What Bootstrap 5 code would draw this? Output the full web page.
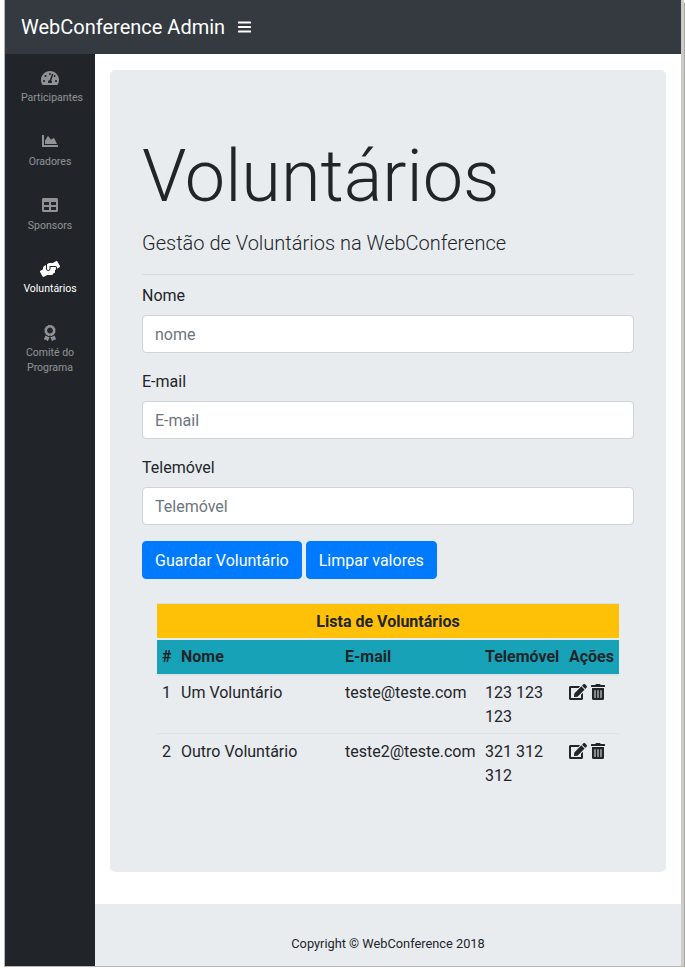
<!DOCTYPE html>
<html lang="pt">
<head>
<meta charset="utf-8">
<title>WebConference Admin</title>
<link href="https://cdn.jsdelivr.net/npm/bootstrap@5.3.0/dist/css/bootstrap.min.css" rel="stylesheet">
<style>
html,body{height:100%;background:#fff}
body{font-family:Roboto,sans-serif;font-size:16px;color:#212529;overflow:hidden}
.frame{width:685px;height:969px;padding:0 1px 2px 4px;background:linear-gradient(#aaa,#aaa) right 3px/1px 964px no-repeat}
.shell{height:967px;border-left:1px solid #b5b5b5;border-right:3px solid #cfcbc7;border-bottom:1px solid #b5b5b5;display:flex;flex-direction:column;background:#fff}
.topbar{height:54px;background:#343a40;padding:0 16px;flex:none}
.brandname{font-size:20px;color:#fff;text-decoration:none;margin-right:13px}
.burger{display:block}
.lower{flex:1;display:flex;min-height:0}
.side{width:90px;background:#212529;flex:none;padding:15.5px 0 0}
.side-link{display:block;text-align:center;color:rgba(255,255,255,.5);font-size:10.5px;line-height:15px;text-decoration:none;padding:0 16px;margin-bottom:18.75px;height:45px}
.side-link svg{display:block;margin:0 auto 4.5px;height:16px;fill:currentColor;overflow:visible}
.side-link.on{color:#fff}
.main{flex:1;display:flex;flex-direction:column;min-width:0}
.content{flex:1;padding:16px 15px 0}
.hero{background:#e9ecef;border-radius:5px;height:802px;padding:64px 32px}
.hero-title{font-size:72px;font-weight:300;line-height:1.2;margin:0 0 8px}
.hero-sub{font-size:20px;font-weight:300;line-height:30px;margin:0 0 16px}
.hero hr{margin:16px 0 8px;opacity:1;border-color:#d8dbde}
.field-label{margin-bottom:8px;line-height:24px;display:block;padding-top:1px;height:24px}
.field{height:38px;border-color:#ced4da;border-radius:4px;color:#495057;padding:6px 12px}
.field::placeholder{color:#6c757d}
.field-group{margin-bottom:16px}
.action{background:#007bff;border-color:#007bff;border-radius:4px;height:38px;padding:7px 12px 5px}
.tbl-wrap{padding:0 15px;margin-top:24px}
.vtable{width:462px;table-layout:fixed;border-collapse:separate;border-spacing:0;color:#212529;margin:0;--bs-table-bg:transparent}
.vtable th,.vtable td{padding:5px;line-height:24px;border:0;background:transparent;color:#212529}
.vtable .cap th{background:#ffc107;text-align:center;border-top:1px solid #dee2e6;height:35px;padding:6px 5px 4px}
.vtable .heads th{background:#17a2b8;border-top:2px solid #e9ecef;border-bottom:2px solid #dee2e6;height:38px;padding:5px 5px 5px}
.vtable tbody td{padding:5px 5px 4px}
.vtable tbody tr+tr td{border-top:1px solid #dee2e6;padding-top:6px}
.acts{display:flex;gap:4px;padding-top:3px}
.acts svg{height:16px;display:block;fill:#212529}
.foot{height:62px;background:#e9ecef;flex:none;display:flex;align-items:flex-end;justify-content:center;font-size:12.8px;padding-bottom:13px;line-height:19px}
</style>
</head>
<body>
<div class="frame">
<div class="shell">
  <nav class="navbar topbar d-flex justify-content-start align-items-center flex-nowrap">
    <a class="brandname" href="#">WebConference Admin</a>
    <svg class="burger" width="13" height="12" viewBox="0 0 13 12" fill="#fff"><rect y="0.5" width="13" height="2" rx=".5"/><rect y="5" width="13" height="2" rx=".5"/><rect y="9.5" width="13" height="2" rx=".5"/></svg>
  </nav>
  <div class="lower">
    <aside class="side">
      <a class="side-link" href="#"><svg viewBox="0 0 576 512"><path d="M288 32C128.94 32 0 160.94 0 320c0 52.8 14.25 102.26 39.06 144.8 5.61 9.62 16.3 15.2 27.44 15.2h443c11.14 0 21.83-5.58 27.44-15.2C561.75 422.26 576 372.8 576 320c0-159.06-128.94-288-288-288zm0 64c14.71 0 26.58 10.13 30.32 23.65-1.11 2.26-2.64 4.23-3.45 6.67l-9.22 27.67c-5.13 3.49-10.97 6.01-17.64 6.01-17.67 0-32-14.33-32-32S270.33 96 288 96zM96 384c-17.67 0-32-14.33-32-32s14.33-32 32-32 32 14.33 32 32-14.33 32-32 32zm48-160c-17.67 0-32-14.33-32-32s14.33-32 32-32 32 14.33 32 32-14.33 32-32 32zm246.77-72.41l-61.33 184C343.13 347.33 352 364.54 352 384c0 11.72-3.38 22.55-8.88 32H232.88c-5.5-9.45-8.88-20.28-8.88-32 0-33.94 26.5-61.43 59.9-63.59l61.34-184.01c4.17-12.56 17.73-19.45 30.36-15.17 12.57 4.19 19.35 17.79 15.17 30.36zm14.66 57.2l15.52-46.55c3.47-1.29 7.13-2.23 11.05-2.23 17.67 0 32 14.33 32 32s-14.33 32-32 32c-11.38-.01-20.89-6.28-26.57-15.22zM480 384c-17.67 0-32-14.33-32-32s14.33-32 32-32 32 14.33 32 32-14.33 32-32 32z"/></svg>Participantes</a>
      <a class="side-link" href="#"><svg viewBox="0 0 512 512"><path d="M500 384c6.6 0 12 5.4 12 12v40c0 6.6-5.4 12-12 12H12c-6.6 0-12-5.4-12-12V76c0-6.6 5.4-12 12-12h40c6.6 0 12 5.4 12 12v308h436zM372.7 159.5L288 216l-85.3-113.7c-5.1-6.8-15.5-6.3-19.9.9L96 248v104h384l-89.9-187.8c-3.2-6.5-11.4-8.7-17.4-4.7z"/></svg>Oradores</a>
      <a class="side-link" href="#"><svg viewBox="0 0 512 512"><path d="M464 32H48C21.49 32 0 53.49 0 80v352c0 26.51 21.49 48 48 48h416c26.51 0 48-21.49 48-48V80c0-26.51-21.49-48-48-48zM224 416H64v-96h160v96zm0-160H64v-96h160v96zm224 160H288v-96h160v96zm0-160H288v-96h160v96z"/></svg>Sponsors</a>
      <a class="side-link on" href="#"><svg viewBox="0 0 640 512"><path d="M488 192H336v56c0 39.7-32.3 72-72 72s-72-32.3-72-72V126.4l-64.9 39C107.8 176.9 96 197.8 96 220.2v47.3l-80 46.2C.7 322.5-4.6 342.1 4.3 357.4l80 138.6c8.8 15.3 28.4 20.5 43.7 11.7L231.4 448H368c35.3 0 64-28.7 64-64h16c17.7 0 32-14.3 32-32v-64h8c13.3 0 24-10.7 24-24v-48c0-13.3-10.7-24-24-24zm147.7-37.4L555.7 16C546.9.7 527.3-4.5 512 4.3L408.6 64H306.4c-12 0-23.7 3.4-34 9.7L238.9 94.6C229.5 100.4 224 110.6 224 121.6V248c0 22.1 17.9 40 40 40s40-17.9 40-40v-88h184c30.9 0 56 25.1 56 56v28.5l80-46.2c15.3-8.9 20.5-28.4 11.7-43.7z"/></svg>Voluntários</a>
      <a class="side-link" href="#"><svg viewBox="0 0 384 512"><path d="M97.12 362.63c-8.69-8.69-4.16-6.24-25.12-11.85-9.51-2.55-17.87-7.45-25.43-13.32L1.2 448.7c-4.39 10.77 3.81 22.47 15.43 22.03l52.69-2.01L105.56 507c8 8.44 22.04 5.81 26.43-4.96l52.05-127.62c-10.84 6.04-22.87 9.58-35.31 9.58-19.5 0-37.82-7.59-51.61-21.37zM382.8 448.7l-45.37-111.24c-7.56 5.88-15.92 10.77-25.43 13.32-21.07 5.64-16.45 3.18-25.12 11.85-13.79 13.78-32.12 21.37-51.62 21.37-12.44 0-24.47-3.55-35.31-9.58L252 502.04c4.39 10.77 18.44 13.4 26.43 4.96l36.25-38.28 52.69 2.01c11.62.44 19.82-11.27 15.43-22.03zM263 340c15.28-15.55 17.03-14.21 38.79-20.14 13.89-3.79 24.75-14.84 28.47-28.98 7.48-28.4 5.54-24.97 25.95-45.75 10.17-10.35 14.14-25.44 10.42-39.58-7.47-28.38-7.48-24.42 0-52.83 3.72-14.14-.25-29.23-10.42-39.58-20.41-20.78-18.47-17.36-25.95-45.75-3.72-14.14-14.58-25.19-28.47-28.98-27.88-7.61-24.52-5.62-44.95-26.41-10.17-10.35-25-14.4-38.89-10.61-27.87 7.6-23.98 7.61-51.9 0-13.89-3.79-28.72.25-38.89 10.61-20.41 20.78-17.05 18.8-44.94 26.41-13.89 3.79-24.75 14.84-28.47 28.98-7.47 28.39-5.54 24.97-25.95 45.75-10.17 10.35-14.15 25.44-10.42 39.58 7.47 28.36 7.48 24.4 0 52.82-3.72 14.14.25 29.23 10.42 39.59 20.41 20.78 18.47 17.35 25.95 45.75 3.72 14.14 14.58 25.19 28.47 28.98C104.6 325.96 106.27 325 121 340c13.23 13.47 33.84 15.88 49.74 5.82a39.676 39.676 0 0 1 42.53 0c15.89 10.06 36.5 7.65 49.73-5.82zM97.66 175.96c0-53.03 42.24-96.02 94.34-96.02s94.34 42.99 94.34 96.02-42.24 96.02-94.34 96.02-94.34-42.99-94.34-96.02z"/></svg>Comité do Programa</a>
    </aside>
    <div class="main">
      <div class="content">
        <section class="hero">
          <h1 class="hero-title">Voluntários</h1>
          <p class="hero-sub">Gestão de Voluntários na WebConference</p>
          <hr>
          <form>
            <div class="field-group"><label class="field-label">Nome</label><input class="form-control field" placeholder="nome"></div>
            <div class="field-group"><label class="field-label">E-mail</label><input class="form-control field" placeholder="E-mail"></div>
            <div class="field-group"><label class="field-label">Telemóvel</label><input class="form-control field" placeholder="Telemóvel"></div>
            <button type="button" class="btn btn-primary action">Guardar Voluntário</button>
            <button type="button" class="btn btn-primary action">Limpar valores</button>
          </form>
          <div class="tbl-wrap">
            <table class="table vtable">
              <colgroup><col style="width:19px"><col style="width:164px"><col style="width:140px"><col style="width:84px"><col style="width:55px"></colgroup>
              <thead>
                <tr class="cap"><th colspan="5">Lista de Voluntários</th></tr>
                <tr class="heads"><th>#</th><th>Nome</th><th>E-mail</th><th>Telemóvel</th><th>Ações</th></tr>
              </thead>
              <tbody>
                <tr><td>1</td><td>Um Voluntário</td><td>teste@teste.com</td><td>123 123 123</td><td><div class="acts"><svg viewBox="0 0 576 512"><path d="M402.6 83.2l90.2 90.2c3.8 3.8 3.8 10 0 13.8L274.4 405.6l-92.8 10.3c-12.4 1.4-22.9-9.1-21.5-21.5l10.3-92.8L388.8 83.2c3.8-3.8 10-3.8 13.8 0zm162-22.9l-48.8-48.8c-15.2-15.2-39.9-15.2-55.2 0l-35.4 35.4c-3.8 3.8-3.8 10 0 13.8l90.2 90.2c3.8 3.8 10 3.8 13.8 0l35.4-35.4c15.2-15.3 15.2-40 0-55.2zM384 346.2V448H64V128h229.8c3.2 0 6.2-1.3 8.5-3.5l40-40c7.6-7.6 2.2-20.5-8.5-20.5H48C21.5 64 0 85.5 0 112v352c0 26.5 21.5 48 48 48h352c26.5 0 48-21.5 48-48V306.2c0-10.7-12.9-16-20.5-8.5l-40 40c-2.2 2.3-3.5 5.3-3.5 8.5z"/></svg><svg viewBox="0 0 448 512"><path d="M32 464a48 48 0 0 0 48 48h288a48 48 0 0 0 48-48V128H32zm272-256a16 16 0 0 1 32 0v224a16 16 0 0 1-32 0zm-96 0a16 16 0 0 1 32 0v224a16 16 0 0 1-32 0zm-96 0a16 16 0 0 1 32 0v224a16 16 0 0 1-32 0zM432 32H312l-9.4-18.7A24 24 0 0 0 281.1 0H166.8a23.72 23.72 0 0 0-21.4 13.3L136 32H16A16 16 0 0 0 0 48v32a16 16 0 0 0 16 16h416a16 16 0 0 0 16-16V48a16 16 0 0 0-16-16z"/></svg></div></td></tr>
                <tr><td>2</td><td>Outro Voluntário</td><td>teste2@teste.com</td><td>321 312 312</td><td><div class="acts"><svg viewBox="0 0 576 512"><path d="M402.6 83.2l90.2 90.2c3.8 3.8 3.8 10 0 13.8L274.4 405.6l-92.8 10.3c-12.4 1.4-22.9-9.1-21.5-21.5l10.3-92.8L388.8 83.2c3.8-3.8 10-3.8 13.8 0zm162-22.9l-48.8-48.8c-15.2-15.2-39.9-15.2-55.2 0l-35.4 35.4c-3.8 3.8-3.8 10 0 13.8l90.2 90.2c3.8 3.8 10 3.8 13.8 0l35.4-35.4c15.2-15.3 15.2-40 0-55.2zM384 346.2V448H64V128h229.8c3.2 0 6.2-1.3 8.5-3.5l40-40c7.6-7.6 2.2-20.5-8.5-20.5H48C21.5 64 0 85.5 0 112v352c0 26.5 21.5 48 48 48h352c26.5 0 48-21.5 48-48V306.2c0-10.7-12.9-16-20.5-8.5l-40 40c-2.2 2.3-3.5 5.3-3.5 8.5z"/></svg><svg viewBox="0 0 448 512"><path d="M32 464a48 48 0 0 0 48 48h288a48 48 0 0 0 48-48V128H32zm272-256a16 16 0 0 1 32 0v224a16 16 0 0 1-32 0zm-96 0a16 16 0 0 1 32 0v224a16 16 0 0 1-32 0zm-96 0a16 16 0 0 1 32 0v224a16 16 0 0 1-32 0zM432 32H312l-9.4-18.7A24 24 0 0 0 281.1 0H166.8a23.72 23.72 0 0 0-21.4 13.3L136 32H16A16 16 0 0 0 0 48v32a16 16 0 0 0 16 16h416a16 16 0 0 0 16-16V48a16 16 0 0 0-16-16z"/></svg></div></td></tr>
              </tbody>
            </table>
          </div>
        </section>
      </div>
      <footer class="foot">Copyright © WebConference 2018</footer>
    </div>
  </div>
</div>
</div>
<script src="https://cdn.jsdelivr.net/npm/bootstrap@5.3.0/dist/js/bootstrap.bundle.min.js"></script>
</body>
</html>
